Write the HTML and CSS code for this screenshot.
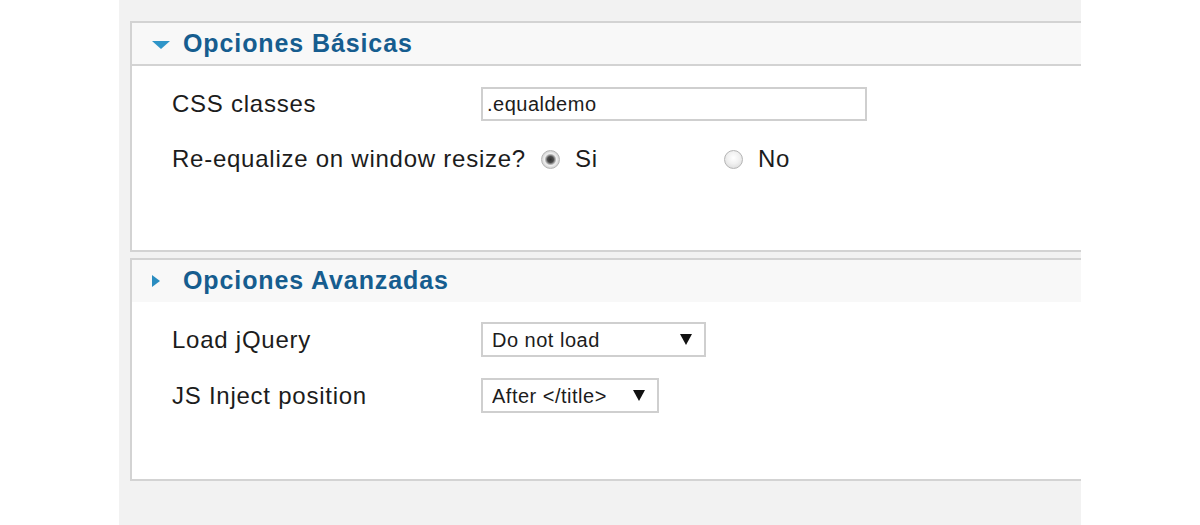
FILE: index.html
```html
<!DOCTYPE html>
<html lang="es">
<head>
    <meta charset="UTF-8">
    <title>Opciones</title>
    <link rel="stylesheet" href="styles.css">
</head>
<body>
    <div class="page">
        <!-- Basic options -->
        <div class="panel">
            <h3 class="panel-title open"><span class="arrow"></span>Opciones Básicas</h3>
            <div class="panel-body basic">
                <div class="row">
                    <label for="cssClasses">CSS classes</label>
                    <input type="text" id="cssClasses" class="text-input" value=".equaldemo">
                </div>
                <div class="row">
                    <label>Re-equalize on window resize?</label>
                    <span class="option"><input type="radio" name="resize" checked>Si</span>
                    <span class="option"><input type="radio" name="resize">No</span>
                </div>
            </div>
        </div>

        <!-- Advanced options -->
        <div class="panel">
            <h3 class="panel-title"><span class="arrow"></span>Opciones Avanzadas</h3>
            <div class="panel-body advanced">
                <div class="row">
                    <label for="loadJquery">Load jQuery</label>
                    <span class="select wide">
                        <select id="loadJquery">
                            <option>Do not load</option>
                            <option>Load</option>
                        </select>
                    </span>
                </div>
                <div class="row">
                    <label for="jsPosition">JS Inject position</label>
                    <span class="select narrow">
                        <select id="jsPosition">
                            <option>After &lt;/title&gt;</option>
                            <option>Before &lt;/head&gt;</option>
                        </select>
                    </span>
                </div>
            </div>
        </div>
    </div>
</body>
</html>
```

FILE: styles.css
```css
body {
    margin: 0;
    padding: 0;
    background-color: #fff;
    font-family: "Liberation Sans", Arial, sans-serif;
    color: #1c1c1c;
}

.page {
    margin-left: 119px;
    width: 962px;
    height: 525px;
    box-sizing: border-box;
    padding-top: 21px;
    background-color: #f2f2f2;
    overflow: hidden;
}

.panel {
    margin-left: 11px;
    width: 1000px;
    border: 2px solid #d3d3d3;
    border-right: none;
    margin-bottom: 6px;
}

.panel-title {
    margin: 0;
    height: 41px;
    display: flex;
    align-items: center;
    background-color: #f8f8f8;
    color: #165d8f;
    font-size: 25px;
    font-weight: bold;
    letter-spacing: 0.9px;
}

.panel-title.open {
    border-bottom: 2px solid #d3d3d3;
}

.arrow {
    display: inline-block;
    width: 31px;
    margin-left: 20px;
}

.arrow::before {
    content: '';
    display: block;
    width: 0;
    height: 0;
    border-top: 6.5px solid transparent;
    border-bottom: 6.5px solid transparent;
    border-left: 8px solid #2a8cc0;
}

.open .arrow::before {
    border-left: 9.5px solid transparent;
    border-right: 9.5px solid transparent;
    border-top: 8px solid #2f95c8;
    border-bottom: none;
    margin-top: 2px;
}

.panel-body {
    background-color: #fff;
    padding-left: 40px;
    display: flex;
    flex-direction: column;
    gap: 21px;
}

.panel-body.basic {
    height: 184px;
    padding-top: 21px;
    box-sizing: border-box;
}

.panel-body.advanced {
    height: 178px;
    padding-top: 20px;
    box-sizing: border-box;
    border-top: 1px solid #f8f8f8;
}

.row {
    display: flex;
    align-items: center;
    height: 34px;
    font-size: 24px;
    letter-spacing: 0.75px;
}

.advanced .row {
    height: 35px;
}

.row label {
    min-width: 309px;
}

.text-input {
    width: 386px;
    height: 34px;
    box-sizing: border-box;
    border: 2px solid #cfcfcf;
    padding: 0 4px;
    font-family: inherit;
    font-size: 20px;
    letter-spacing: 0.5px;
    color: #1c1c1c;
}

.option {
    display: flex;
    align-items: center;
    width: 183px;
    margin-left: 15px;
}

.option + .option {
    margin-left: 0;
}

.option input {
    appearance: none;
    -webkit-appearance: none;
    width: 19px;
    height: 19px;
    margin: 0 15px 0 0;
    border-radius: 50%;
    border: 1px solid #b5b5b5;
    box-sizing: border-box;
    background: radial-gradient(circle at 50% 40%, #ffffff 0, #f1f1f1 45%, #d4d4d4 100%);
}

.option input:checked {
    background: radial-gradient(circle at 50% 50%, #2e2e2e 0, #4a4a4a 3px, #9a9a9a 4.5px, #efefef 6px, #cfcfcf 9px);
}

.select {
    position: relative;
    display: inline-block;
    height: 35px;
}

.select.wide {
    width: 225px;
}

.select.narrow {
    width: 178px;
}

.select select {
    appearance: none;
    -webkit-appearance: none;
    width: 100%;
    height: 100%;
    box-sizing: border-box;
    border: 2px solid #cfcfcf;
    border-radius: 0;
    background-color: #fff;
    padding: 0 0 0 9px;
    font-family: inherit;
    font-size: 20px;
    letter-spacing: 0.5px;
    color: #1c1c1c;
}

.select::after {
    content: '';
    position: absolute;
    right: 14px;
    top: 12px;
    width: 0;
    height: 0;
    border-left: 6px solid transparent;
    border-right: 6px solid transparent;
    border-top: 11px solid #111;
    pointer-events: none;
}
```
